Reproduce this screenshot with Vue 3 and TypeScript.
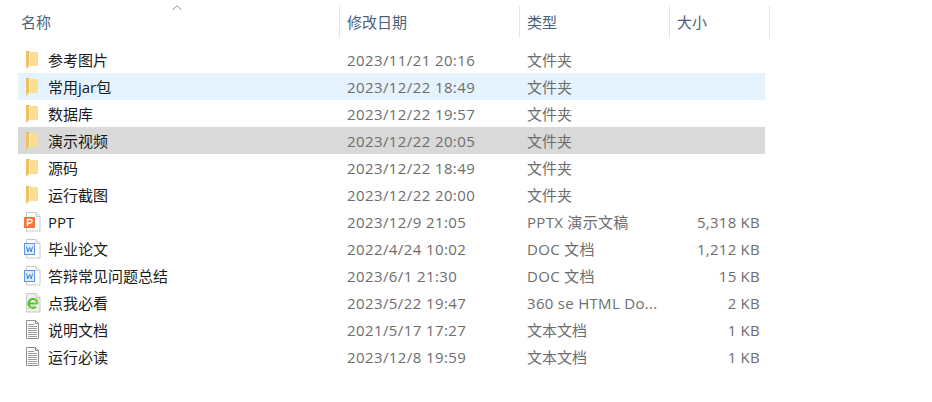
<script setup lang="ts">
type Kind = 'folder' | 'ppt' | 'doc' | 'html' | 'txt'

interface FileRow {
  name: string
  date: string
  type: string
  size?: string
  kind: Kind
  state?: 'hover' | 'selected'
}

const columns = [
  { label: '名称', cls: 'col-name' },
  { label: '修改日期', cls: 'col-date' },
  { label: '类型', cls: 'col-type' },
  { label: '大小', cls: 'col-size' },
]

const rows: FileRow[] = [
  { name: '参考图片', date: '2023/11/21 20:16', type: '文件夹', kind: 'folder' },
  { name: '常用jar包', date: '2023/12/22 18:49', type: '文件夹', kind: 'folder', state: 'hover' },
  { name: '数据库', date: '2023/12/22 19:57', type: '文件夹', kind: 'folder' },
  { name: '演示视频', date: '2023/12/22 20:05', type: '文件夹', kind: 'folder', state: 'selected' },
  { name: '源码', date: '2023/12/22 18:49', type: '文件夹', kind: 'folder' },
  { name: '运行截图', date: '2023/12/22 20:00', type: '文件夹', kind: 'folder' },
  { name: 'PPT', date: '2023/12/9 21:05', type: 'PPTX 演示文稿', size: '5,318 KB', kind: 'ppt' },
  { name: '毕业论文', date: '2022/4/24 10:02', type: 'DOC 文档', size: '1,212 KB', kind: 'doc' },
  { name: '答辩常见问题总结', date: '2023/6/1 21:30', type: 'DOC 文档', size: '15 KB', kind: 'doc' },
  { name: '点我必看', date: '2023/5/22 19:47', type: '360 se HTML Do...', size: '2 KB', kind: 'html' },
  { name: '说明文档', date: '2021/5/17 17:27', type: '文本文档', size: '1 KB', kind: 'txt' },
  { name: '运行必读', date: '2023/12/8 19:59', type: '文本文档', size: '1 KB', kind: 'txt' },
]

const hasLatin = (text: string) => /[A-Za-z]/.test(text)
</script>

<template>
  <div class="explorer">
    <header class="head">
      <svg class="sort" width="10" height="6" viewBox="0 0 10 6">
        <path d="M.5 5 5 .8 9.5 5" fill="none" stroke="#8a8f96" />
      </svg>
      <div v-for="col in columns" :key="col.label" class="head-cell" :class="col.cls">{{ col.label }}</div>
    </header>

    <div class="list">
      <div v-for="row in rows" :key="row.name" class="row" :class="row.state">
        <div class="col-name name-cell">
          <svg class="icon" width="18" height="21" viewBox="0 0 18 21">
            <template v-if="row.kind === 'folder'">
              <path d="M6 3h9v14H6z" fill="#fadf93" />
              <path d="M3 2h3.500v14L4 19.500H3z" fill="#eec264" />
              <path d="M6.500 3v13.500L4.500 19" fill="none" stroke="#fdeebf" />
              <path d="M3 2h3v1H3z" fill="#e6b955" />
            </template>
            <template v-else-if="row.kind === 'txt'">
              <path d="M3.500 1.500h9l3 3v15h-12z" fill="#fff" stroke="#8f8f8f" />
              <path d="M12.500 1.500v3h3" fill="none" stroke="#8f8f8f" />
              <path d="M5 5.500h6M5 7.500h9M5 9.500h9M5 11.500h9M5 13.500h9M5 15.500h9M5 17.500h9" stroke="#9a9a9a" />
            </template>
            <template v-else>
              <path d="M3.500 1.500h9.500l4 4v14.500h-13.500z" :fill="row.kind === 'html' ? '#f0f0ea' : '#fff'" stroke="#c8c8c8" />
              <path d="M13 1.500v4h4" fill="#ececec" stroke="#c8c8c8" />
            </template>
            <template v-if="row.kind === 'ppt'">
              <rect x="1" y="6" width="11" height="11" fill="#f4763f" />
              <path d="M4.500 15V8.500h2.800a1.700 1.700 0 0 1 0 3.500H4.500" fill="none" stroke="#fff" stroke-width="1.400" />
            </template>
            <template v-if="row.kind === 'doc'">
              <rect x="1.500" y="5.500" width="10" height="11" fill="#e0ecfb" stroke="#5b95ea" />
              <path d="M3.500 8.500l1.300 5.500 1.700-4.500 1.700 4.500 1.300-5.500" fill="none" stroke="#3f7fdf" />
            </template>
            <template v-if="row.kind === 'html'">
              <path d="M14.500 11.500h-8.500M14.500 11.500a4.500 4.500 0 1 0-1.500 3.300" fill="none" stroke="#4fc12a" stroke-width="2" />
              <path d="M5 16.500Q11 15 15.500 7" fill="none" stroke="#a5d96d" />
            </template>
          </svg>
          <span class="name">{{ row.name }}</span>
        </div>
        <div class="col-date cell date">{{ row.date }}</div>
        <div class="col-type cell" :class="{ latin: hasLatin(row.type) }">{{ row.type }}</div>
        <div class="col-size cell size">{{ row.size }}</div>
      </div>
    </div>
  </div>
</template>

<style scoped>
.explorer {
  width: 932px;
  height: 402px;
  background: #fff;
  overflow: hidden;
  font-family: "Open Sans", "Noto Sans CJK SC", sans-serif;
  font-size: 15px;
}

.head {
  position: relative;
  display: flex;
  height: 32px;
  margin-top: 6px;
  padding-left: 18px;
}

.sort {
  position: absolute;
  left: 172px;
  top: -1px;
}

.head-cell {
  display: flex;
  align-items: center;
  box-sizing: border-box;
  padding: 0 0 2px 3px;
  color: #4c607a;
  border-right: 1px solid #e5e5e5;
}

.head-cell + .head-cell {
  padding-left: 7px;
}

.col-name { width: 322px; flex: none; }
.col-date { width: 180px; flex: none; }
.col-type { width: 150px; flex: none; }
.col-size { width: 100px; flex: none; }

.list {
  margin-top: 8px;
  padding-left: 18px;
}

.row {
  display: flex;
  align-items: center;
  width: 747px;
  height: 27px;
}

.row.hover { background: #e5f3ff; }
.row.selected { background: #d9d9d9; }

.name-cell {
  display: flex;
  align-items: center;
  box-sizing: border-box;
  padding-left: 5px;
}

.icon {
  flex: none;
  margin-right: 7px;
}

.name {
  color: #1a1a1a;
  white-space: nowrap;
}

.cell {
  box-sizing: border-box;
  padding-left: 7px;
  color: #6d6d6d;
  white-space: nowrap;
}

.date { letter-spacing: 0.4px; }
.latin { letter-spacing: 0.3px; }

.size {
  width: 90px;
  padding: 0;
  text-align: right;
  letter-spacing: 0.25px;
}
</style>
